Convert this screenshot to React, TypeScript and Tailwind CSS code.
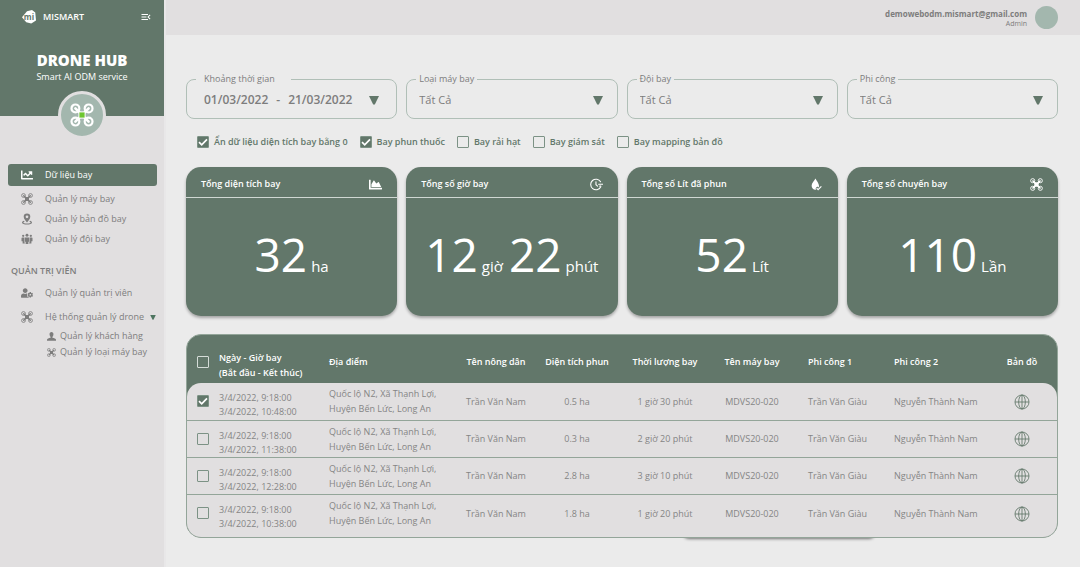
import { useState } from 'react'
import type { ReactNode } from 'react'
import { FaChartArea, FaChartLine, FaUserCog } from 'react-icons/fa'
import { MdMenuOpen } from 'react-icons/md'

type IconProps = { className?: string }

function DroneIcon({ className }: IconProps) {
  return (
    <svg viewBox="0 0 24 24" className={className} fill="none" stroke="currentColor" aria-hidden="true">
      <circle cx="5" cy="5" r="3.8" strokeWidth="1.7" />
      <circle cx="19" cy="5" r="3.8" strokeWidth="1.7" />
      <circle cx="5" cy="19" r="3.8" strokeWidth="1.7" />
      <circle cx="19" cy="19" r="3.8" strokeWidth="1.7" />
      <path d="M5.5 5.5l13 13M18.5 5.5l-13 13" strokeWidth="3" strokeLinecap="round" />
      <rect x="8" y="8" width="8" height="8" rx="1.5" fill="currentColor" stroke="none" />
    </svg>
  )
}

function DroneBadge({ className }: IconProps) {
  return (
    <svg viewBox="0 0 24 24" className={className} fill="none" stroke="#fff" aria-hidden="true">
      <circle cx="5.4" cy="5.4" r="3.9" strokeWidth="2.2" />
      <circle cx="18.6" cy="5.4" r="3.9" strokeWidth="2.2" />
      <circle cx="5.4" cy="18.6" r="3.9" strokeWidth="2.2" />
      <circle cx="18.6" cy="18.6" r="3.9" strokeWidth="2.2" />
      <path d="M5.4 5.4l13.2 13.2M18.6 5.4L5.4 18.6" strokeWidth="2.6" strokeLinecap="round" />
      <rect x="8.4" y="8.4" width="7.2" height="7.2" fill="#fff" stroke="none" />
      <rect x="9.4" y="9.4" width="5.2" height="5.2" fill="#6cc62f" stroke="none" />
    </svg>
  )
}

function PinIcon({ className }: IconProps) {
  return (
    <svg viewBox="0 0 24 24" className={className} fill="currentColor" aria-hidden="true">
      <path fillRule="evenodd" d="M12 1a6.6 6.6 0 0 0-6.6 6.6c0 4.4 5 9.4 6.6 11.4 1.6-2 6.6-7 6.6-11.4A6.6 6.6 0 0 0 12 1zm0 4a2.7 2.7 0 1 1 0 5.4A2.7 2.7 0 0 1 12 5z" />
      <path d="M6 15.5c-2.5.8-4 1.9-4 3.4 0 2.7 4.5 4.3 10 4.3s10-1.6 10-4.3c0-1.5-1.5-2.6-4-3.4l-1.2 1.9c1.5.4 2.4.9 2.4 1.5 0 1.1-3.2 1.9-7.2 1.9s-7.2-.8-7.2-1.9c0-.6.9-1.1 2.4-1.5z" />
    </svg>
  )
}

function TeamIcon({ className }: IconProps) {
  return (
    <svg viewBox="0 0 24 24" className={className} fill="currentColor" aria-hidden="true">
      <circle cx="12" cy="4.4" r="2.9" />
      <circle cx="4.4" cy="5.6" r="2.3" />
      <circle cx="19.6" cy="5.6" r="2.3" />
      <path d="M8 9h8v8.5h-1.3V22H9.3v-4.5H8z" />
      <path d="M2.5 9.2H7v9.3l.8 2.5H3.2v-4.6H1v-5.7a1.5 1.5 0 0 1 1.5-1.5z" />
      <path d="M21.5 9.2H17v9.3l-.8 2.5h4.6v-4.6H23v-5.7a1.5 1.5 0 0 0-1.5-1.5z" />
    </svg>
  )
}

function PersonIcon({ className }: IconProps) {
  return (
    <svg viewBox="0 0 24 24" className={className} fill="currentColor" aria-hidden="true">
      <path d="M12 0c3.4 0 5.2 2.5 5.2 6 0 3-1.2 5.6-2.8 6.900v2.300c4.600.9 9.600 2.200 9.600 5.300V23H0v-2.500c0-3.100 5-4.400 9.600-5.300v-2.300C8 11.600 6.800 9 6.800 6c0-3.500 1.800-6 5.200-6z" />
    </svg>
  )
}

function ClockIcon({ className }: IconProps) {
  return (
    <svg viewBox="0 0 24 24" className={className} fill="none" stroke="currentColor" strokeWidth="2" strokeLinecap="round" aria-hidden="true">
      <path d="M19.5 7a9.8 9.8 0 1 0 .2 9.6" />
      <path d="M11 7v5.5l3 2.5M16 11.5h7.5M18 15h2" />
    </svg>
  )
}

function DropIcon({ className }: IconProps) {
  return (
    <svg viewBox="0 0 24 24" className={className} fill="currentColor" aria-hidden="true">
      <path d="M10 1C8 5 3 9.5 3 14.2 3 18.5 6 21.5 10 21.5c.7 0 1.3-.1 1.9-.3l-1.700-2.400 3.300-3 1.800 1.700 1.600-2C16.600 9.800 12 5 10 1z" />
      <path d="M12.3 18.8l2.7 2.7 6-6" fill="none" stroke="currentColor" strokeWidth="2.2" />
    </svg>
  )
}

function GlobeIcon({ className }: IconProps) {
  return (
    <svg viewBox="0 0 24 24" className={className} fill="none" stroke="currentColor" strokeWidth="1.3" aria-hidden="true">
      <circle cx="12" cy="12" r="10.5" />
      <ellipse cx="12" cy="12" rx="5" ry="10.5" />
      <path d="M12 1.5v21M1.5 12h21" />
    </svg>
  )
}

function Triangle({ className }: IconProps) {
  return (
    <svg viewBox="0 0 10 9" className={className} fill="currentColor" aria-hidden="true">
      <path d="M0 0h10L5.8 8.5H4.2z" />
    </svg>
  )
}

function Logo() {
  return (
    <span className="relative flex h-[14px] w-[14px] items-center justify-center">
      <svg viewBox="0 0 28 28" className="absolute inset-0" fill="#fff" aria-hidden="true">
        <path d="M10 2.5L20 0l6.5 5 1.5 16-9.5 6-10-2.5L0 14.5z" />
      </svg>
      <span className="relative text-[8px] leading-none font-bold text-[#62776a]">mi</span>
    </span>
  )
}

const mainLinks = [
  { icon: DroneIcon, label: 'Quản lý máy bay' },
  { icon: PinIcon, label: 'Quản lý bản đồ bay' },
  { icon: TeamIcon, label: 'Quản lý đội bay' },
]

const filters = [
  { id: 'machine', label: 'Loại máy bay' },
  { id: 'team', label: 'Đội bay' },
  { id: 'pilot', label: 'Phi công' },
]

const options = [
  { label: 'Ẩn dữ liệu diện tích bay bằng 0', checked: true },
  { label: 'Bay phun thuốc', checked: true },
  { label: 'Bay rải hạt', checked: false },
  { label: 'Bay giám sát', checked: false },
  { label: 'Bay mapping bản đồ', checked: false },
]

const stats = [
  { title: 'Tổng diện tích bay', icon: FaChartArea, values: [['32', 'ha']] },
  { title: 'Tổng số giờ bay', icon: ClockIcon, values: [['12', 'giờ'], ['22', 'phút']] },
  { title: 'Tổng số Lít đã phun', icon: DropIcon, values: [['52', 'Lít']] },
  { title: 'Tổng số chuyến bay', icon: DroneIcon, values: [['110', 'Lần']] },
]

const flights = [
  { end: '10:48:00', area: '0.5 ha', duration: '1 giờ 30 phút', checked: true },
  { end: '11:38:00', area: '0.3 ha', duration: '2 giờ 20 phút', checked: false },
  { end: '12:28:00', area: '2.8 ha', duration: '3 giờ 10 phút', checked: false },
  { end: '10:38:00', area: '1.8 ha', duration: '1 giờ 20 phút', checked: false },
]

function Checkbox({ checked, label, light, children }: { checked: boolean; label?: string; light?: boolean; children?: ReactNode }) {
  const [on, setOn] = useState(checked)
  return (
    <label className="inline-flex items-center gap-[5px]">
      <span className="relative block h-3 w-3">
        <input
          type="checkbox"
          checked={on}
          onChange={() => setOn(!on)}
          aria-label={label}
          className={`block h-3 w-3 appearance-none rounded-[1px] border ${light ? 'border-[#d5dcd8]' : 'border-[#7c9285] checked:bg-[#62776a]'}`}
        />
        {on && (
          <svg viewBox="0 0 12 12" className="pointer-events-none absolute inset-0" fill="none" stroke="#fff" strokeWidth="1.7" aria-hidden="true">
            <path d="M2 6.2l2.7 2.7L10 3.4" />
          </svg>
        )}
      </span>
      {children}
    </label>
  )
}

function Sidebar() {
  return (
    <aside className="w-[164px] shrink-0 bg-[#e1dfe0] text-[9px] text-[#7d7d7d]">
      <div className="flex h-[116px] flex-col items-center bg-[#62776a] text-white">
        <div className="flex h-[34px] w-full shrink-0 items-center pr-3 pl-[22px]">
          <Logo />
          <span className="ml-[7px] font-semibold">MISMART</span>
          <button type="button" aria-label="Thu gọn menu" className="ml-auto">
            <MdMenuOpen className="h-3 w-3" />
          </button>
        </div>
        <h1 className="mt-4 text-[15px] leading-5 font-extrabold">DRONE HUB</h1>
        <p className="leading-[14px]">Smart AI ODM service</p>
        <div className="mt-[7px] flex h-12 w-12 shrink-0 items-center justify-center rounded-full border-[3px] border-[#e1dfe0] bg-[#a3b7ae]">
          <DroneBadge className="h-6 w-6" />
        </div>
      </div>

      <nav className="pt-12 pr-[7px] pl-2">
        <a href="#du-lieu" className="flex h-[22px] items-center rounded-[3px] bg-[#62776a] pl-[13px] text-white">
          <FaChartLine className="mr-3 h-3 w-3" />
          Dữ liệu bay
        </a>
        <div className="mt-[3px]">
          {mainLinks.map((l) => (
            <a key={l.label} href="#quan-ly" className="flex h-5 items-center pl-[13px]">
              <l.icon className="mr-3 h-3 w-3" />
              {l.label}
            </a>
          ))}
        </div>
        <h2 className="mt-[14px] pl-[3px] leading-4 font-semibold">QUẢN TRỊ VIÊN</h2>
        <a href="#quan-tri" className="mt-1 flex h-5 items-center pl-[13px]">
          <FaUserCog className="mr-3 h-3 w-3" />
          Quản lý quản trị viên
        </a>
        <button type="button" aria-expanded="true" className="mt-1 flex h-5 w-full items-center pl-[13px] whitespace-nowrap">
          <DroneIcon className="mr-3 h-3 w-3" />
          Hệ thống quản lý drone
          <Triangle className="mr-px ml-auto h-[5px] w-[6px] text-[#4e7560]" />
        </button>
        <a href="#khach-hang" className="mt-px flex h-4 items-center pl-[39px]">
          <PersonIcon className="mr-1 h-[9px] w-[9px]" />
          Quản lý khách hàng
        </a>
        <a href="#loai-may-bay" className="flex h-4 items-center pl-[39px]">
          <DroneIcon className="mr-1 h-[9px] w-[9px]" />
          Quản lý loại máy bay
        </a>
      </nav>
    </aside>
  )
}

function Filters() {
  return (
    <div className="grid grid-cols-4 gap-[9px]">
      <fieldset className="h-[46px] min-w-0 rounded-[8px] border border-[#b0bfb7] px-[9px]">
        <legend className="pr-4 pl-2 text-[9px] leading-3">Khoảng thời gian</legend>
        <button type="button" className="flex h-[30px] w-full items-center px-2 text-[12px] font-semibold">
          <span>01/03/2022</span>
          <span className="mx-2">-</span>
          <span>21/03/2022</span>
          <Triangle className="ml-auto h-[9px] w-[10px] text-[#62776a]" />
        </button>
      </fieldset>
      {filters.map((f) => (
        <div key={f.id} className="relative">
          <fieldset className="h-[46px] min-w-0 rounded-[8px] border border-[#b0bfb7] px-[9px]">
            <legend className="px-[3px] text-[9px] leading-3">
              <label htmlFor={f.id}>{f.label}</label>
            </legend>
            <select id={f.id} className="h-[30px] w-full appearance-none px-[3px] text-[11px]">
              <option>Tất Cả</option>
            </select>
          </fieldset>
          <Triangle className="pointer-events-none absolute top-[23px] right-[15px] h-[9px] w-[10px] text-[#62776a]" />
        </div>
      ))}
    </div>
  )
}

function Stats() {
  return (
    <div className="mt-[19px] grid grid-cols-4 gap-[9px]">
      {stats.map((s) => (
        <section key={s.title} className="rounded-[15px] bg-[#62776a] text-white shadow-[0_2px_3px_rgba(0,0,0,0.3)]">
          <div className="flex h-[31px] items-center justify-between border-b border-[#d0d8d3] pt-1 pr-[15px] pl-[15px]">
            <h2 className="text-[9px] font-semibold">{s.title}</h2>
            <s.icon className="h-[13px] w-[13px]" />
          </div>
          <p className="flex h-[118px] items-baseline justify-center gap-[6px] pt-6 text-[46px] leading-[64px]">
            {s.values.map(([n, unit]) => (
              <span key={unit}>
                {n} <span className="-ml-2 text-[15px]">{unit}</span>
              </span>
            ))}
          </p>
        </section>
      ))}
    </div>
  )
}

function FlightTable() {
  return (
    <div className="relative z-0 mt-[18px]">
      <div className="absolute bottom-0 left-[57%] -z-10 h-3 w-[22%] rounded-[8px] shadow-[0_1px_3px_rgba(0,0,0,0.5)]" />
      <div className="overflow-hidden rounded-[15px] border border-[#93a599] bg-[#62776a]">
        <table className="w-full table-fixed text-center text-[9px] leading-[15px]">
          <colgroup>
            <col className="w-[32px]" />
            <col className="w-[110px]" />
            <col className="w-[126px]" />
            <col className="w-[82px]" />
            <col className="w-[80px]" />
            <col className="w-[96px]" />
            <col className="w-[78px]" />
            <col className="w-[86px]" />
            <col className="w-[110px]" />
            <col className="w-[70px]" />
          </colgroup>
          <thead>
            <tr className="h-[48px] whitespace-nowrap text-white *:pt-[5px] *:font-semibold">
              <th><div className="flex justify-center"><Checkbox checked={false} label="Chọn tất cả" light /></div></th>
              <th className="pt-3! text-left">Ngày - Giờ bay<br />(Bắt đầu - Kết thúc)</th>
              <th className="text-left">Địa điểm</th>
              <th>Tên nông dân</th>
              <th>Diện tích phun</th>
              <th>Thời lượng bay</th>
              <th>Tên máy bay</th>
              <th className="pl-[17px] text-left">Phi công 1</th>
              <th className="pl-[17px] text-left">Phi công 2</th>
              <th>Bản đồ</th>
            </tr>
          </thead>
          <tbody className="text-[#858585]">
            {flights.map((f) => (
              <tr
                key={f.end}
                className="h-[37px] whitespace-nowrap *:border-b *:border-[#93a599] *:bg-[#e1dfe0] last:h-[43px] last:*:border-b-0 last:*:pb-[5px] first:*:first:rounded-tl-[14px] first:*:last:rounded-tr-[14px]"
              >
                <td><div className="flex justify-center"><Checkbox checked={f.checked} label={`Chọn chuyến bay ${f.end}`} /></div></td>
                <td className="pt-2 text-left leading-[14px]">3/4/2022, 9:18:00<br />3/4/2022, {f.end}</td>
                <td className="text-left">Quốc lộ N2, Xã Thạnh Lợi,<br />Huyện Bến Lức, Long An</td>
                <td>Trần Văn Nam</td>
                <td>{f.area}</td>
                <td>{f.duration}</td>
                <td>MDVS20-020</td>
                <td className="pl-[17px] text-left">Trần Văn Giàu</td>
                <td className="pl-[17px] text-left">Nguyễn Thành Nam</td>
                <td>
                  <button type="button" aria-label="Xem bản đồ" className="align-middle">
                    <GlobeIcon className="h-4 w-4 text-[#62776a]" />
                  </button>
                </td>
              </tr>
            ))}
          </tbody>
        </table>
      </div>
    </div>
  )
}

export default function App() {
  return (
    <div className="flex min-h-screen bg-[#ebebeb] font-['Open_Sans','Noto_Sans',sans-serif] text-[#7d7d7d]">
      <Sidebar />
      <div className="min-w-0 flex-1 border-l-2 border-[#e8e7e8]">
        <header className="flex h-[35px] items-center justify-end bg-[#e1dfe0] pr-[22px]">
          <div className="mr-2 text-right">
            <p className="text-[8px] leading-[11px] font-bold">demowebodm.mismart@gmail.com</p>
            <p className="text-[7px] leading-[9px]">Admin</p>
          </div>
          <div className="h-[23px] w-[23px] rounded-full bg-[#a3b7ae]" />
        </header>
        <main className="pt-[38px] pr-[22px] pb-7 pl-5">
          <Filters />
          <div className="mt-4 flex items-center gap-3 pl-[11px] text-[9px] leading-[13px] font-semibold text-[#62776a]">
            {options.map((o) => (
              <Checkbox key={o.label} checked={o.checked}>{o.label}</Checkbox>
            ))}
          </div>
          <Stats />
          <FlightTable />
        </main>
      </div>
    </div>
  )
}
